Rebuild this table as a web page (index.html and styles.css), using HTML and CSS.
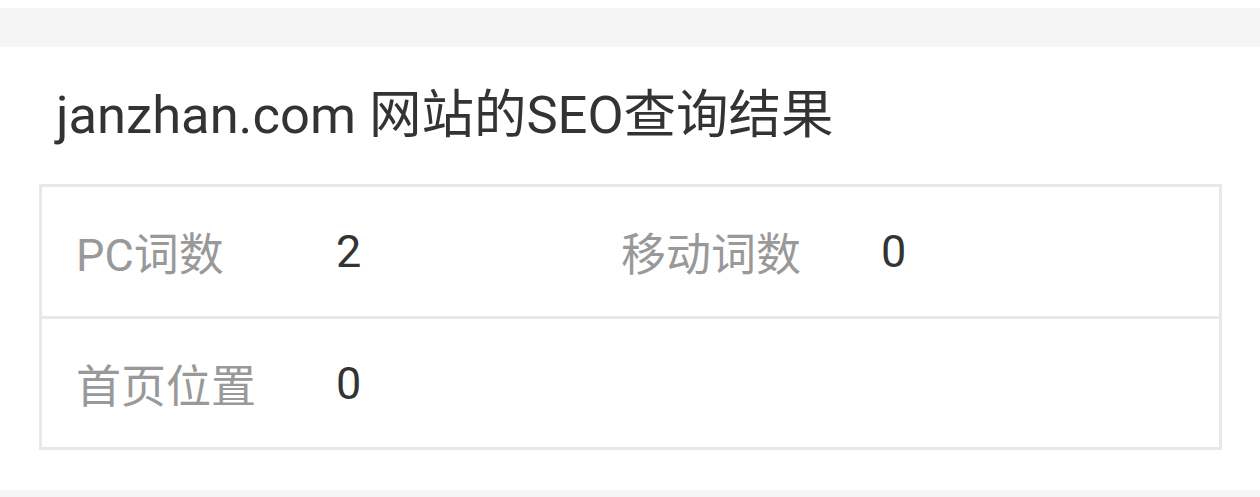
FILE: index.html
```html
<!DOCTYPE html>
<html lang="zh-CN">
<head>
    <meta charset="UTF-8">
    <meta name="viewport" content="width=device-width, initial-scale=1.0">
    <title>janzhan.com 网站的SEO查询结果</title>
    <link rel="stylesheet" href="styles.css">
</head>
<body>

    <div class="band"></div>

    <div class="panel">
        <h2 class="panel-title">janzhan.com 网站的SEO查询结果</h2>

        <div class="seo-table">
            <div class="seo-row">
                <span class="label">PC词数</span>
                <span class="value">2</span>
                <span class="label">移动词数</span>
                <span class="value">0</span>
            </div>
            <div class="seo-row">
                <span class="label">首页位置</span>
                <span class="value">0</span>
            </div>
        </div>
    </div>

    <div class="band band-bottom"></div>

</body>
</html>
```

FILE: styles.css
```css
body {
    margin: 0;
    padding-top: 8px;
    background-color: #fff;
    font-family: Roboto, "Noto Sans CJK SC", sans-serif;
    color: #333;
}

.band {
    height: 39px;
    background-color: #f5f5f5;
}

.band-bottom {
    height: 20px;
}

.panel {
    padding: 0 38px 40px 39px;
}

.panel-title {
    margin: 0;
    padding: 34px 0 35px 17px;
    font-size: 52.5px;
    font-weight: normal;
    line-height: 68px;
    color: #333;
}

.seo-table {
    border: 3px solid #e8e8e8;
}

.seo-row {
    display: grid;
    grid-template-columns: 260px 285px 260px auto;
    align-items: center;
    height: 129px;
    padding-left: 34px;
    font-size: 45px;
}

.seo-row + .seo-row {
    height: 128px;
    border-top: 3px solid #e8e8e8;
}

.label {
    color: #999;
}

.value {
    color: #333;
}
```
